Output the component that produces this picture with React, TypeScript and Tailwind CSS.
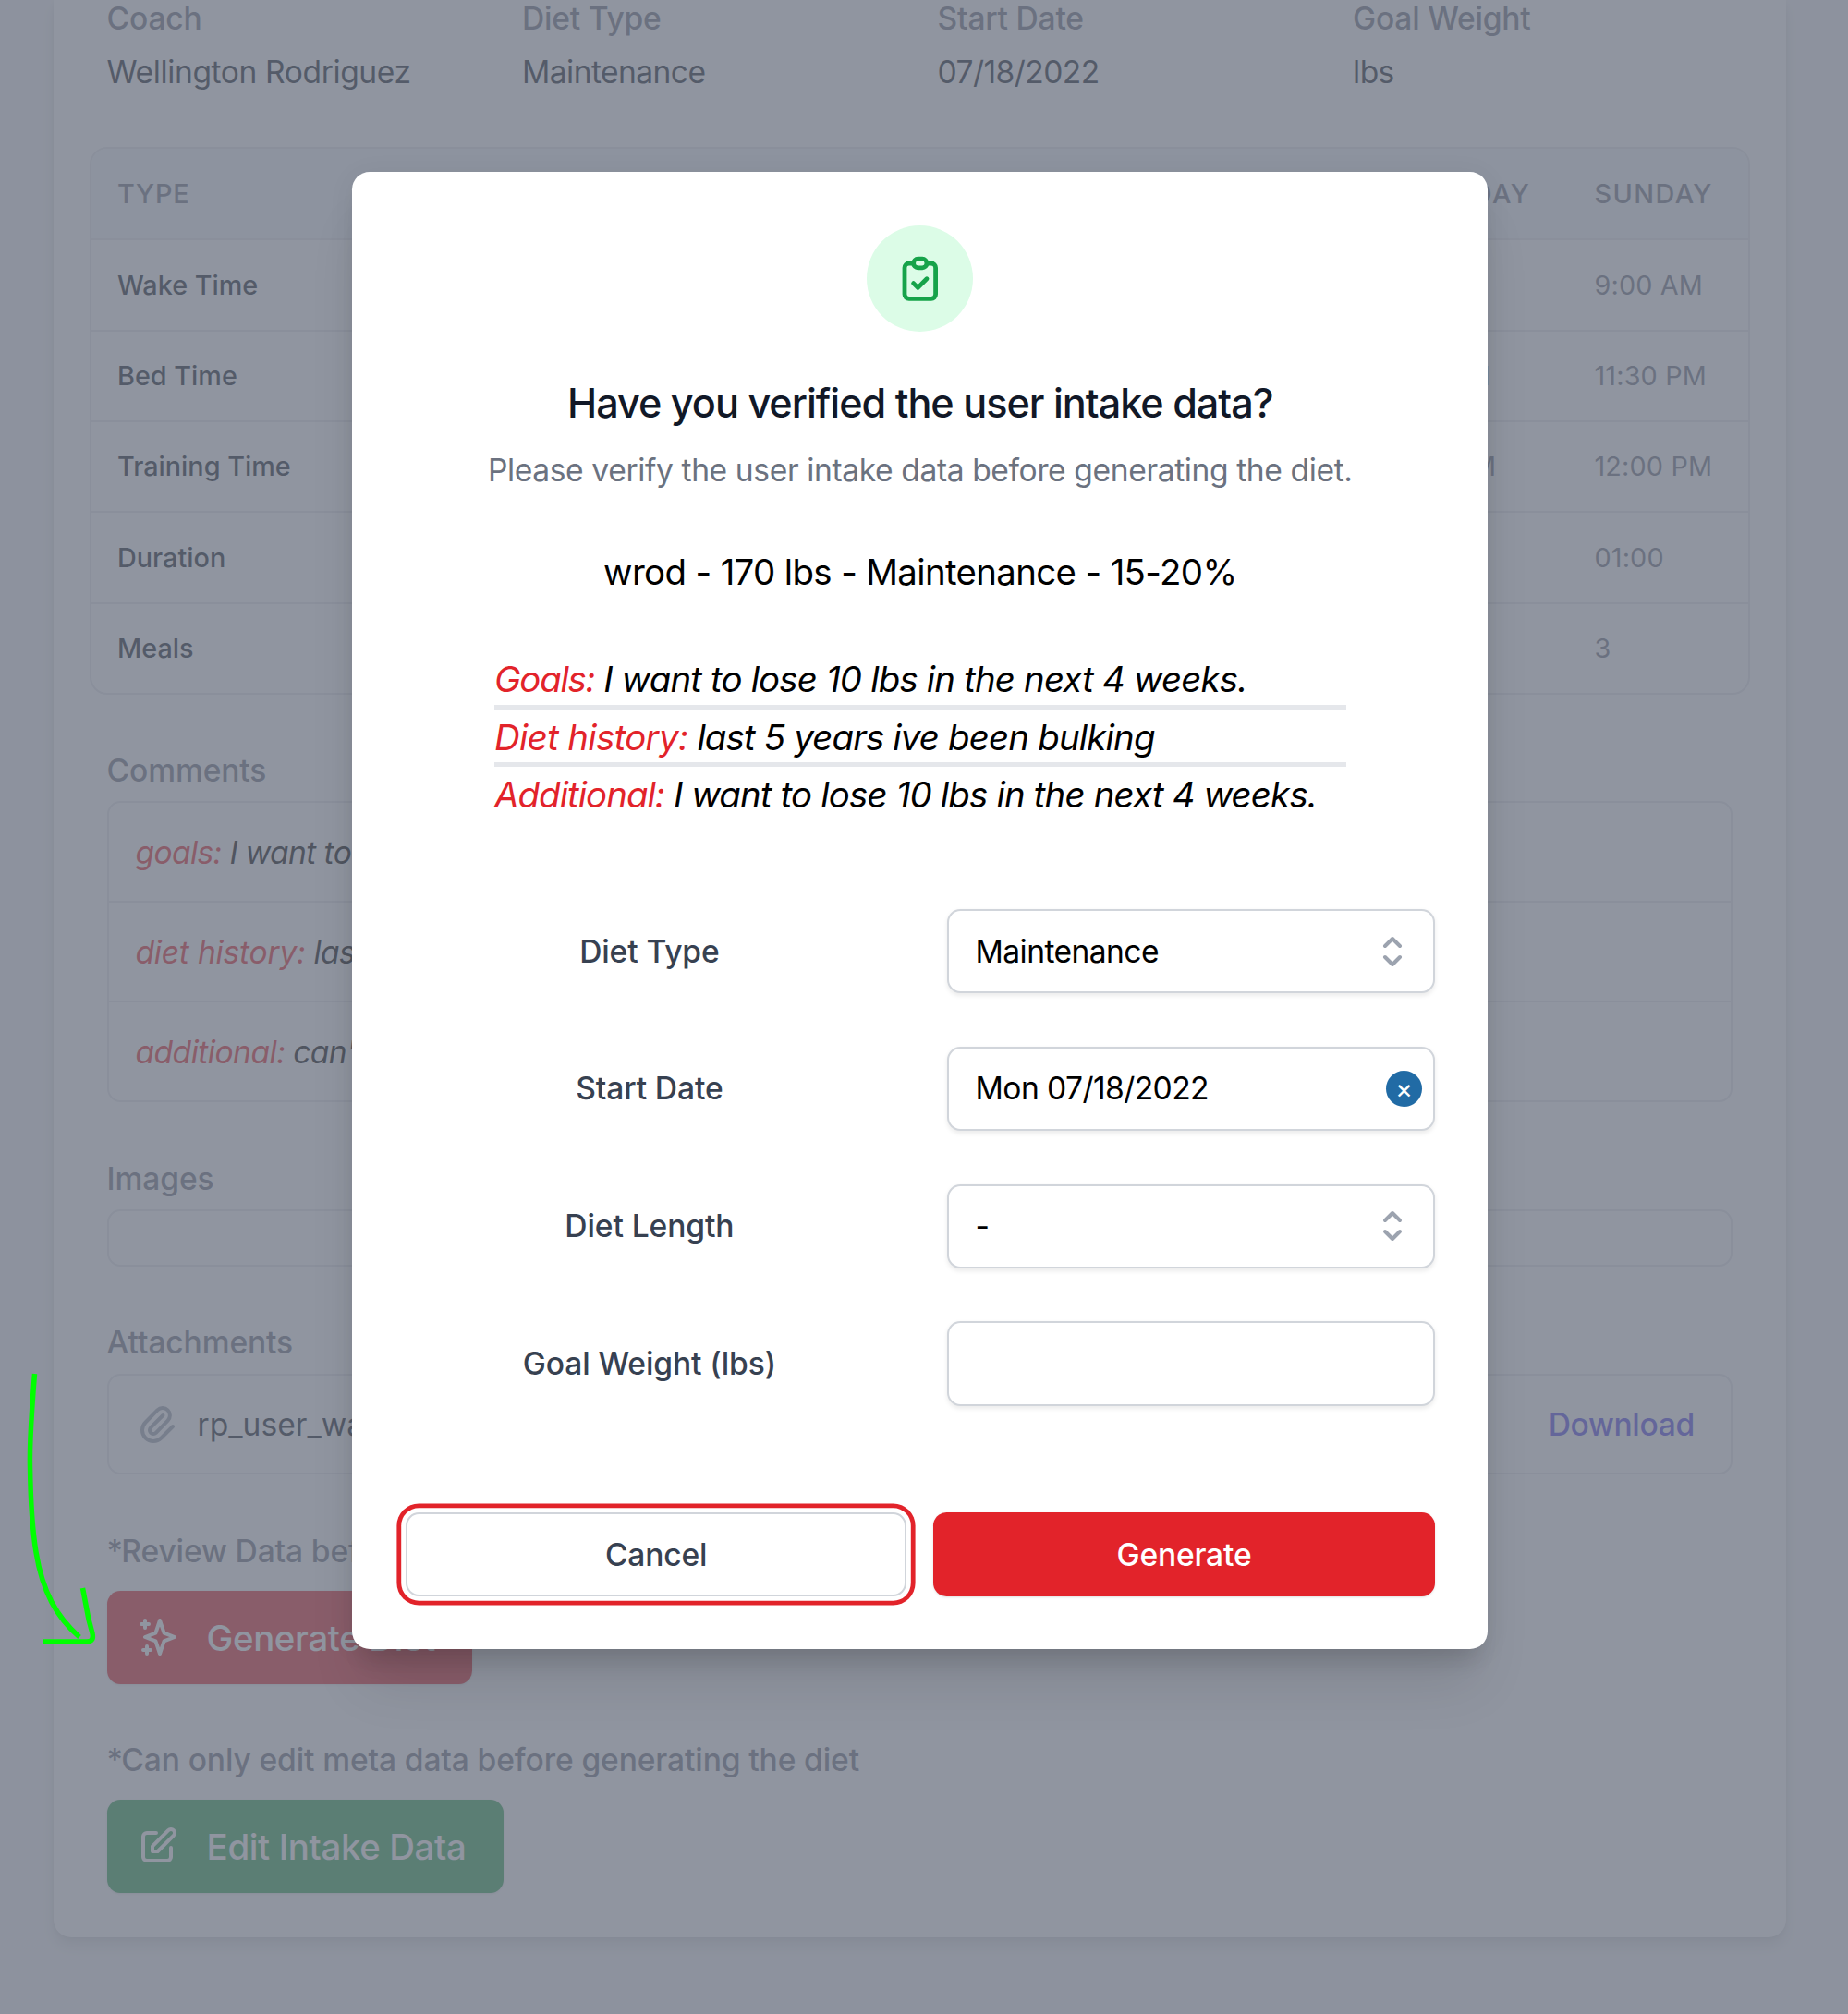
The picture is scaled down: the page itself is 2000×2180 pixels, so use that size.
import React from "react";

type IconProps = { d: string; className: string };

function OutlineIcon({ d, className }: IconProps) {
  return (
    <svg
      viewBox="0 0 24 24"
      fill="none"
      stroke="currentColor"
      strokeWidth={2}
      strokeLinecap="round"
      strokeLinejoin="round"
      className={className}
    >
      <path d={d} />
    </svg>
  );
}

const ICONS = {
  clipboardCheck:
    "M9 5H7a2 2 0 00-2 2v12a2 2 0 002 2h10a2 2 0 002-2V7a2 2 0 00-2-2h-2M9 5a2 2 0 002 2h2a2 2 0 002-2M9 5a2 2 0 012-2h2a2 2 0 012 2m-6 9l2 2 4-4",
  sparkles:
    "M5 3v4M3 5h4M6 17v4m-2-2h4m5-16l2.286 6.857L21 12l-5.714 2.143L13 21l-2.286-6.857L5 12l5.714-2.143L13 3z",
  pencil:
    "M11 5H6a2 2 0 00-2 2v11a2 2 0 002 2h11a2 2 0 002-2v-5m-1.414-9.414a2 2 0 112.828 2.828L11.828 15H9v-2.828l8.586-8.586z",
  paperClip:
    "M15.172 7l-6.586 6.586a2 2 0 102.828 2.828l6.414-6.586a4 4 0 00-5.656-5.656l-6.415 6.585a6 6 0 108.486 8.486L20.5 13",
  selector: "M8 9l4-4 4 4m0 6l-4 4-4-4",
};

const SUMMARY = [
  ["Coach", "Wellington Rodriguez"],
  ["Diet Type", "Maintenance"],
  ["Start Date", "07/18/2022"],
  ["Goal Weight", "lbs"],
];

const DAYS = ["Saturday", "Sunday"];

const ROWS = [
  ["Wake Time", "9:00 AM"],
  ["Bed Time", "11:30 PM"],
  ["Training Time", "12:00 PM"],
  ["Duration", "01:00"],
  ["Meals", "3"],
];

const COMMENTS = [
  ["goals:", "I want to", "tracking-[-0.6px]"],
  ["diet history:", "last", "tracking-[-0.2px]"],
  ["additional:", "can't", "tracking-[-0.5px]"],
];

const NOTES = [
  ["Goals:", "I want to lose 10 lbs in the next 4 weeks.", "tracking-[-1.25px]"],
  ["Diet history:", "last 5 years ive been bulking", "tracking-[-0.64px]"],
  ["Additional:", "I want to lose 10 lbs in the next 4 weeks.", "tracking-[-0.95px]"],
];

function SectionLabel({ children }: { children: React.ReactNode }) {
  return (
    <div className="h-12 text-[33.6px] leading-[48px] font-medium tracking-[-0.12px] text-[#6b7280]">{children}</div>
  );
}

function Hint({ children }: { children: React.ReactNode }) {
  return (
    <SectionLabel>
      <span className="tracking-[-1.8px]">*</span>
      {children}
    </SectionLabel>
  );
}

function ScheduleTable() {
  const cols = "grid grid-cols-[minmax(0,1fr)_234px_194px]";
  return (
    <div className="mt-[57.6px] mr-[39.5px] ml-[39px] overflow-hidden rounded-[19.2px] border-2 border-[#e5e7eb] text-[28.8px] leading-[38.4px]">
      <div
        className={`${cols} h-[97px] items-center bg-[#f1f5f9] pt-[2px] font-medium tracking-[0.05em] text-[#6b7280] uppercase`}
      >
        <div className="pl-[28.4px] tracking-[0.03em]">Type</div>
        {DAYS.map((d) => (
          <div key={d} className="pl-[27.8px]">
            {d}
          </div>
        ))}
      </div>
      {ROWS.map(([name, value]) => (
        <div key={name} className={`${cols} h-[98.4px] items-center border-t-2 border-[#e5e7eb] pt-px`}>
          <div className="pl-[28.4px] font-medium text-[#111827]">{name}</div>
          {DAYS.map((d) => (
            <div key={d} className="pl-[27.8px] tracking-[0.15px] text-[#6b7280]">
              {value}
            </div>
          ))}
        </div>
      ))}
    </div>
  );
}

function IntakeCard() {
  return (
    <div className="ml-[57.6px] h-[2096.6px] w-[1875.6px] overflow-hidden rounded-b-[19.2px] bg-white shadow-[0_10px_15px_rgba(0,0,0,0.1),0_2px_5px_rgba(0,0,0,0.06)]">
      <dl className="-mt-1 grid grid-cols-4 gap-[38.4px] px-[58px] text-[33.6px] leading-[48px]">
        {SUMMARY.map(([k, v]) => (
          <div key={k}>
            <dt className="font-medium tracking-[-0.22px] text-[#6b7280]">{k}</dt>
            <dd className={`mt-[9.6px] text-[#111827] ${k === "Coach" ? "tracking-[-0.4px]" : "tracking-[-0.58px]"}`}>
              {v}
            </dd>
          </div>
        ))}
      </dl>

      <ScheduleTable />

      <div className="flex flex-col items-start px-[58px] pt-[57.6px]">
        <SectionLabel>Comments</SectionLabel>
        <div className="mt-[9.6px] w-full rounded-[14.4px] border-2 border-[#e5e7eb] text-[33.6px] leading-[48px] tracking-[-0.6px] italic">
          {COMMENTS.map(([k, v, tracking], i) => (
            <div
              key={k}
              className={`flex items-center px-6 pt-[2px] ${i > 0 ? "h-[108px] border-t-2 border-[#e5e7eb]" : "h-[106px]"}`}
            >
              <p className="pl-[4.8px]">
                <span className={`text-[#e2232a] ${tracking}`}>{k}</span> <span className="text-black">{v}</span>
              </p>
            </div>
          ))}
        </div>

        <div className="h-[58.4px]" />
        <SectionLabel>Images</SectionLabel>
        <div className="mt-[9.6px] h-[62px] w-full rounded-[14.4px] border-2 border-[#e5e7eb]" />

        <div className="h-[58px]" />
        <SectionLabel>Attachments</SectionLabel>
        <div className="mt-[9.6px] flex h-[109.4px] w-full items-center rounded-[14.4px] border-2 border-[#e5e7eb] pt-px pr-[39.4px] pl-[28.8px] text-[33.6px]">
          <OutlineIcon d={ICONS.paperClip} className="size-12 text-[#9ca3af]" />
          <span className="ml-[19.2px] flex-1 text-[#111827]">rp_user_wa</span>
          <span className="font-medium tracking-[-0.35px] text-[#4f46e5]">Download</span>
        </div>

        <div className="h-[58.6px]" />
        <Hint>Review Data before</Hint>
        <div className="mt-[19.2px] flex h-[100.8px] w-[395px] items-center rounded-[14.4px] bg-[#e2232a] pl-[31.2px] text-[38.4px] font-medium tracking-[-0.35px] text-white shadow-sm">
          <OutlineIcon d={ICONS.sparkles} className="mr-[28.8px] size-12" />
          <span className="pt-[2px]">Generate Diet</span>
        </div>

        <div className="h-[58px]" />
        <Hint>Can only edit meta data before generating the diet</Hint>
        <div className="mt-[19.2px] flex h-[100.8px] w-[429.5px] items-center rounded-[14.4px] bg-[#2fa251] pl-[31.2px] text-[38.4px] font-medium tracking-[-0.35px] text-white shadow-sm">
          <OutlineIcon d={ICONS.pencil} className="mr-[28.8px] size-12" />
          <span className="pt-[2px]">Edit Intake Data</span>
        </div>
      </div>
    </div>
  );
}

function Field({ label, value, kind }: { label: string; value: string; kind: "select" | "date" | "text" }) {
  return (
    <div className="grid grid-cols-2 items-center gap-[57.6px]">
      <div className="text-center font-medium tracking-[-0.1px] text-[#374151]">{label}</div>
      <div
        className={`flex h-[91.2px] items-center justify-between rounded-[14.4px] border-2 border-[#d1d5db] bg-white pl-[29px] text-black shadow-[0_2.4px_4.8px_rgba(0,0,0,0.08)] ${
          kind === "date" ? "pr-[12px]" : "pr-[19.6px]"
        }`}
      >
        <span className="tracking-[-0.58px]">{value}</span>
        {kind === "select" && <OutlineIcon d={ICONS.selector} className="size-12 text-[#9ca3af]" />}
        {kind === "date" && (
          <span className="flex size-[38.4px] items-center justify-center rounded-full bg-[#216ba5] pt-[2px] text-[28.8px] leading-none text-white">
            ×
          </span>
        )}
      </div>
    </div>
  );
}

function VerifyModal() {
  return (
    <div className="absolute top-[186.4px] left-[381.2px] flex h-[1599px] w-[1229.2px] flex-col rounded-[19.2px] bg-white px-[57.6px] pt-[57.6px] text-[33.6px] leading-[48px] shadow-[0_48px_60px_-12px_rgba(0,0,0,0.1),0_24px_24px_-12px_rgba(0,0,0,0.1),0_4px_30px_rgba(0,0,0,0.06)]">
      <div className="mx-auto flex size-[115.2px] items-center justify-center rounded-full bg-[#dcfce7]">
        <OutlineIcon d={ICONS.clipboardCheck} className="size-[57.6px] text-[#16a34a]" />
      </div>
      <h3 className="mt-[49px] text-center text-[43.2px] leading-[57.6px] font-medium tracking-[-1.02px] text-[#111827]">
        Have you verified the user intake data?
      </h3>
      <p className="mt-[19.2px] text-center tracking-[-0.38px] text-[#6b7280]">
        Please verify the user intake data before generating the diet.
      </p>
      <p className="mt-[58px] text-center text-[38.4px] leading-[57.6px] tracking-[-0.64px] text-black">
        wrod - 170 lbs - Maintenance - 15-20%
      </p>
      <div className="mx-auto mt-[56.8px] w-[921.6px] text-[38.4px] leading-[60px] tracking-[-0.82px] whitespace-nowrap text-black italic">
        {NOTES.map(([k, v, tracking], i) => (
          <p key={k} className={i > 0 ? "h-[62.4px] border-t-[5px] border-[#e5e7eb]" : "h-[57.6px]"}>
            <span className={`text-[#e2232a] ${tracking}`}>{k}</span> {v}
          </p>
        ))}
      </div>
      <div className="mt-[96.4px] flex flex-col gap-[57.6px]">
        <Field label="Diet Type" value="Maintenance" kind="select" />
        <Field label="Start Date" value="Mon 07/18/2022" kind="date" />
        <Field label="Diet Length" value="-" kind="select" />
        <Field label="Goal Weight (lbs)" value="" kind="text" />
      </div>
      <div className="mt-auto mb-[57.6px] grid grid-cols-2 gap-[28.8px] font-medium tracking-[-0.2px]">
        <button className="h-[91.2px] rounded-[14.4px] border-2 border-[#d1d5db] bg-white pt-px text-[#374151] shadow-[0_0_0_4.8px_#fff,0_0_0_9.6px_#e2232a]">
          Cancel
        </button>
        <button className="h-[91.2px] rounded-[14.4px] bg-[#e2232a] pt-px text-white shadow-sm">Generate</button>
      </div>
    </div>
  );
}

export default function App() {
  return (
    <div className="relative h-[2180px] w-[2000px] overflow-hidden bg-[#f3f4f6] font-['Inter',sans-serif]">
      <IntakeCard />
      <div className="absolute inset-0 bg-[#6b7280]/75" />
      <VerifyModal />
      <svg
        viewBox="0 0 100 310"
        className="absolute top-[1480px] left-[20px] h-[310px] w-[100px]"
        fill="none"
        stroke="#00ff00"
        strokeWidth={5.5}
      >
        <path d="M17.5 7C14 50 12 85 12.500 107C13 140 14 170 19 200C26 243 41 270 66 292" />
        <path d="M69.500 239L76 273L80 288Q82 297 74 297H27" strokeLinejoin="round" />
      </svg>
    </div>
  );
}
